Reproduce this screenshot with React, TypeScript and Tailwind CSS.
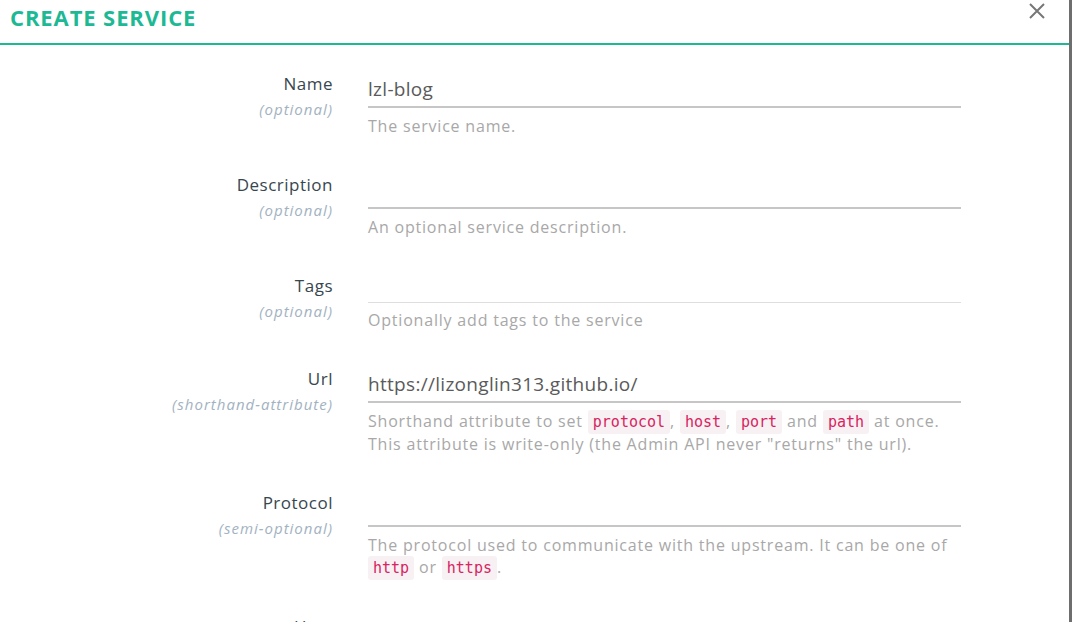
import React from "react";

function Code({ children }: { children: React.ReactNode }) {
  return (
    <code className="rounded-[3px] bg-[#f7f1f4] px-[5px] py-[3px] font-['DejaVu_Sans_Mono',monospace] text-[15px] tracking-normal text-[#d8245f]">
      {children}
    </code>
  );
}

function Row({
  label,
  hint,
  value,
  help,
  thin,
}: {
  label: string;
  hint: string;
  value?: string;
  help?: React.ReactNode;
  thin?: boolean;
}) {
  return (
    <div className="flex mb-[36px]">
      <div className="w-[333px] shrink-0 text-right">
        <div className="text-[17px] leading-[24px] tracking-[0.5px] text-[#37474f]">{label}</div>
        <div className="mt-[2px] text-[15px] leading-[22px] italic tracking-[1px] text-[#a2b2c1]">{hint}</div>
      </div>
      <div className="ml-[35px] w-[593px] shrink-0">
        {thin ? (
          <div className="h-[29px] border-b border-[#dedede]" />
        ) : (
          <div className="h-[36px] border-b-2 border-[#c6c6c6] pt-[3px] text-[19px] leading-[28px] tracking-[0.3px] text-[#5a5a5a]">
            {value}
          </div>
        )}
        <div className={(thin ? "mt-[6px]" : "mt-[7px]") + " whitespace-nowrap text-[16px] leading-[22px] tracking-[0.8px] text-[#a8a8a8]"}>
          {help}
        </div>
      </div>
    </div>
  );
}

export default function App() {
  return (
    <div className="flex h-[622px] w-[1072px] overflow-hidden bg-white font-['Open_Sans',sans-serif]">
      <div className="flex-1 min-w-0">
        <div className="flex h-[45px] items-start justify-between border-b-2 border-[#1db994] pl-[10px] pr-[24px]">
          <h1 className="pt-[3px] text-[22px] leading-[28px] font-bold tracking-[0.9px] text-[#1db994]">
            CREATE SERVICE
          </h1>
          <button className="mt-[3px] text-[#777]">
            <svg width="16" height="16" viewBox="0 0 16 16" fill="none" stroke="currentColor" strokeWidth="2">
              <path d="M1 1L15 15M15 1L1 15" />
            </svg>
          </button>
        </div>
        <div className="pt-[27px]">
          <Row label="Name" hint="(optional)" value="lzl-blog" help="The service name." />
          <Row label="Description" hint="(optional)" value="" help="An optional service description." />
          <Row label="Tags" hint="(optional)" thin help="Optionally add tags to the service" />
          <Row
            label="Url"
            hint="(shorthand-attribute)"
            value="https://lizonglin313.github.io/"
            help={
              <>
                Shorthand attribute to set <Code>protocol</Code>, <Code>host</Code>, <Code>port</Code> and{" "}
                <Code>path</Code> at once.
                <br />
                This attribute is write-only (the Admin API never "returns" the url).
              </>
            }
          />
          <Row
            label="Protocol"
            hint="(semi-optional)"
            value=""
            help={
              <>
                The protocol used to communicate with the upstream. It can be one of
                <br />
                <Code>http</Code> or <Code>https</Code>.
              </>
            }
          />
          <Row label="Host" hint="(semi-optional)" value="" help="The host of the upstream server." />
        </div>
      </div>
      <div className="w-[3px] shrink-0 bg-[#6e6e6e]" />
    </div>
  );
}
